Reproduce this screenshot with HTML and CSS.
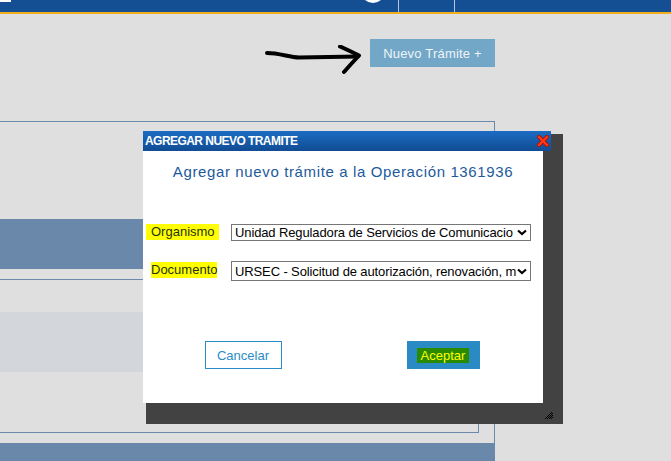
FILE: index.html
```html
<!DOCTYPE html>
<html lang="es">
<head>
<meta charset="utf-8">
<title>Agregar nuevo trámite</title>
<link rel="stylesheet" href="styles.css">
</head>
<body>
<header class="topbar">
  <div class="logo-bit"></div>
  <div class="avatar"></div>
  <div class="sep sep-a"></div>
  <div class="sep sep-b"></div>
</header>

<div class="toolbar">
  <svg class="arrow" width="100" height="32" viewBox="0 0 100 32">
    <path d="M2,8 C14,8 24,12 34,12.5 L93,11.5" fill="none" stroke="#000" stroke-width="4" stroke-linecap="round"/>
    <path d="M75,1.5 Q85,6 94,10.5 Q86,19 79,27" fill="none" stroke="#000" stroke-width="4" stroke-linecap="round" stroke-linejoin="round"/>
  </svg>
  <button class="btn-new">Nuevo Trámite +</button>
</div>

<section class="panel">
  <div class="panel-top"></div>
  <div class="band"></div>
  <div class="inner">
    <div class="inner-gap"></div>
    <div class="light-band"></div>
  </div>
  <div class="band band-bottom"></div>
</section>

<div class="dialog">
  <div class="dialog-shadow">
    <svg class="grip" width="8" height="8" viewBox="0 0 8 8">
      <g fill="#000">
        <rect x="6" y="0" width="1" height="1"/>
        <rect x="5" y="1" width="1" height="1"/><rect x="7" y="1" width="1" height="1"/>
        <rect x="4" y="2" width="1" height="1"/><rect x="6" y="2" width="1" height="1"/>
        <rect x="3" y="3" width="1" height="1"/><rect x="5" y="3" width="1" height="1"/><rect x="7" y="3" width="1" height="1"/>
        <rect x="2" y="4" width="1" height="1"/><rect x="4" y="4" width="1" height="1"/><rect x="6" y="4" width="1" height="1"/>
        <rect x="1" y="5" width="1" height="1"/><rect x="3" y="5" width="1" height="1"/><rect x="5" y="5" width="1" height="1"/><rect x="7" y="5" width="1" height="1"/>
        <rect x="0" y="6" width="1" height="1"/><rect x="2" y="6" width="1" height="1"/><rect x="4" y="6" width="1" height="1"/><rect x="6" y="6" width="1" height="1"/>
      </g>
    </svg>
  </div>
  <div class="dialog-title">
    <span class="title-text">AGREGAR NUEVO TRAMITE</span>
    <svg class="close" width="12" height="12" viewBox="0 0 12 12">
      <path d="M2,2 L10,10 M10,2 L2,10" stroke="#b01000" stroke-width="4" stroke-linecap="square"/>
      <path d="M2,2 L10,10 M10,2 L2,10" stroke="#ff3a1a" stroke-width="2.2" stroke-linecap="square"/>
    </svg>
  </div>
  <div class="dialog-body">
    <h2 class="dialog-heading">Agregar nuevo trámite a la Operación 1361936</h2>
    <div class="form">
      <div class="label-cell"><span class="hl hl-org">Organismo</span></div>
      <div class="select select-org">
        <span class="select-text">Unidad Reguladora de Servicios de Comunicacio</span>
        <svg class="chev" width="10" height="7" viewBox="0 0 10 7"><path d="M1,1.5 L5,5 L9,1.5" fill="none" stroke="#000" stroke-width="2.2"/></svg>
      </div>
      <div class="label-cell"><span class="hl hl-doc">Documento</span></div>
      <div class="select select-doc">
        <span class="select-text">URSEC - Solicitud de autorización, renovación, m</span>
        <svg class="chev" width="10" height="7" viewBox="0 0 10 7"><path d="M1,1.5 L5,5 L9,1.5" fill="none" stroke="#000" stroke-width="2.2"/></svg>
      </div>
    </div>
    <div class="actions">
      <button class="btn-cancel">Cancelar</button>
      <button class="btn-ok"><span class="ok-inner">Aceptar</span></button>
    </div>
  </div>
</div>
</body>
</html>
```

FILE: styles.css
```css
* { box-sizing: border-box; }

html, body {
  margin: 0;
  padding: 0;
}

body {
  width: 671px;
  height: 461px;
  overflow: hidden;
  background: #dfdfdf;
  font-family: "Liberation Sans", Arial, sans-serif;
  position: relative;
}

.topbar {
  display: flex;
  align-items: flex-start;
  height: 14px;
  background: #154f93;
  border-bottom: 2px solid #f2ae1c;
  overflow: hidden;
}

.logo-bit {
  width: 11px;
  height: 2px;
  background: #ffffff;
}

.avatar {
  margin-left: 350px;
  margin-top: -21px;
  width: 24px;
  height: 24px;
  border-radius: 50%;
  background: radial-gradient(circle, #ffffff 0%, #ffffff 80%, #e8dcb0 92%, #154f93 100%);
  flex: none;
}

.sep {
  width: 1px;
  height: 12px;
  background: #b9c5d6;
  flex: none;
}

.sep-a { margin-left: 13px; }
.sep-b { margin-left: 55px; }

.toolbar {
  display: flex;
  align-items: flex-start;
  margin-top: 25px;
  padding-left: 265px;
}

.arrow {
  margin-top: 6px;
  margin-right: 5px;
  flex: none;
}

.btn-new {
  width: 125px;
  height: 28px;
  border: none;
  background: #73a7c7;
  color: #eef4f8;
  font-family: "Liberation Sans", Arial, sans-serif;
  font-size: 13px;
  padding: 0;
  letter-spacing: 0.2px;
}

.panel {
  margin-top: 44px;
  width: 495px;
  border-top: 1px solid #6a89ab;
  border-right: 1px solid #6a89ab;
}

.panel-top { height: 97px; }

.band {
  height: 50px;
  background: #6a89aa;
  margin-bottom: 10px;
}

.inner {
  width: 479px;
  height: 154px;
  border-top: 1px solid #6a89ab;
  border-right: 1px solid #6a89ab;
  border-bottom: 1px solid #6a89ab;
}

.inner-gap { height: 32px; }

.light-band {
  height: 60px;
  background: #d3d7dc;
}

.band-bottom {
  margin-top: 10px;
  height: 30px;
  margin-right: -1px;
  margin-bottom: 0;
}

/* dialog */
.dialog {
  position: absolute;
  left: 143px;
  top: 131px;
  width: 408px;
}

.dialog-shadow {
  position: absolute;
  left: 3px;
  top: 3px;
  width: 417px;
  height: 290px;
  background: #424242;
}

.grip {
  position: absolute;
  left: 399px;
  top: 278px;
}

.dialog-title {
  position: relative;
  height: 20px;
  background: linear-gradient(#1b6cc4, #114c93);
  display: flex;
  align-items: center;
  padding-left: 2px;
}

.title-text {
  color: #ffffff;
  font-size: 12px;
  font-weight: bold;
  letter-spacing: -0.55px;
  line-height: 20px;
}

.close {
  margin-left: auto;
  margin-right: 2px;
}

.dialog-body {
  position: relative;
  width: 400px;
  height: 252px;
  background: #ffffff;
  padding-top: 12px;
}

.dialog-heading {
  margin: 0;
  text-align: center;
  font-size: 15px;
  font-weight: normal;
  line-height: 18px;
  color: #1d5a9c;
  letter-spacing: 0.63px;
}

.form {
  display: grid;
  grid-template-columns: 88px 300px;
  grid-auto-rows: min-content;
  row-gap: 20px;
  margin-top: 43px;
  align-items: start;
}

.label-cell {
  display: flex;
}

.hl {
  background: #ffff00;
  color: #1f3311;
  font-size: 13px;
  line-height: 16px;
  height: 16px;
}

.hl-org {
  margin-left: 3px;
  padding: 0 4px 0 5px;
}

.hl-doc {
  margin-left: 8px;
  margin-top: 1px;
}

.select {
  position: relative;
  display: flex;
  align-items: center;
  border: 1px solid #767676;
  background: #fff;
  overflow: hidden;
  padding-left: 3px;
}

.select-org { height: 17px; }
.select-doc { height: 20px; }

.select-text {
  font-size: 13px;
  color: #000;
  white-space: nowrap;
  letter-spacing: -0.12px;
  width: 279px;
  flex: none;
  line-height: 15px;
}

.chev {
  flex: none;
  margin-left: 3px;
}

.actions {
  display: grid;
  grid-template-columns: 200px 200px;
  justify-items: center;
  margin-top: 60px;
}

.btn-cancel {
  width: 77px;
  height: 28px;
  background: #ffffff;
  border: 1px solid #2a8cc6;
  color: #2a8cc6;
  font-family: "Liberation Sans", Arial, sans-serif;
  font-size: 13px;
  padding: 0;
}

.btn-ok {
  width: 73px;
  height: 28px;
  background: #2a8ac4;
  border: none;
  padding: 0;
  display: flex;
  align-items: center;
  justify-content: center;
}

.ok-inner {
  background: #2a8a00;
  color: #ffff00;
  font-family: "Liberation Sans", Arial, sans-serif;
  font-size: 13px;
  line-height: 15px;
  padding: 0 4px;
}
```
